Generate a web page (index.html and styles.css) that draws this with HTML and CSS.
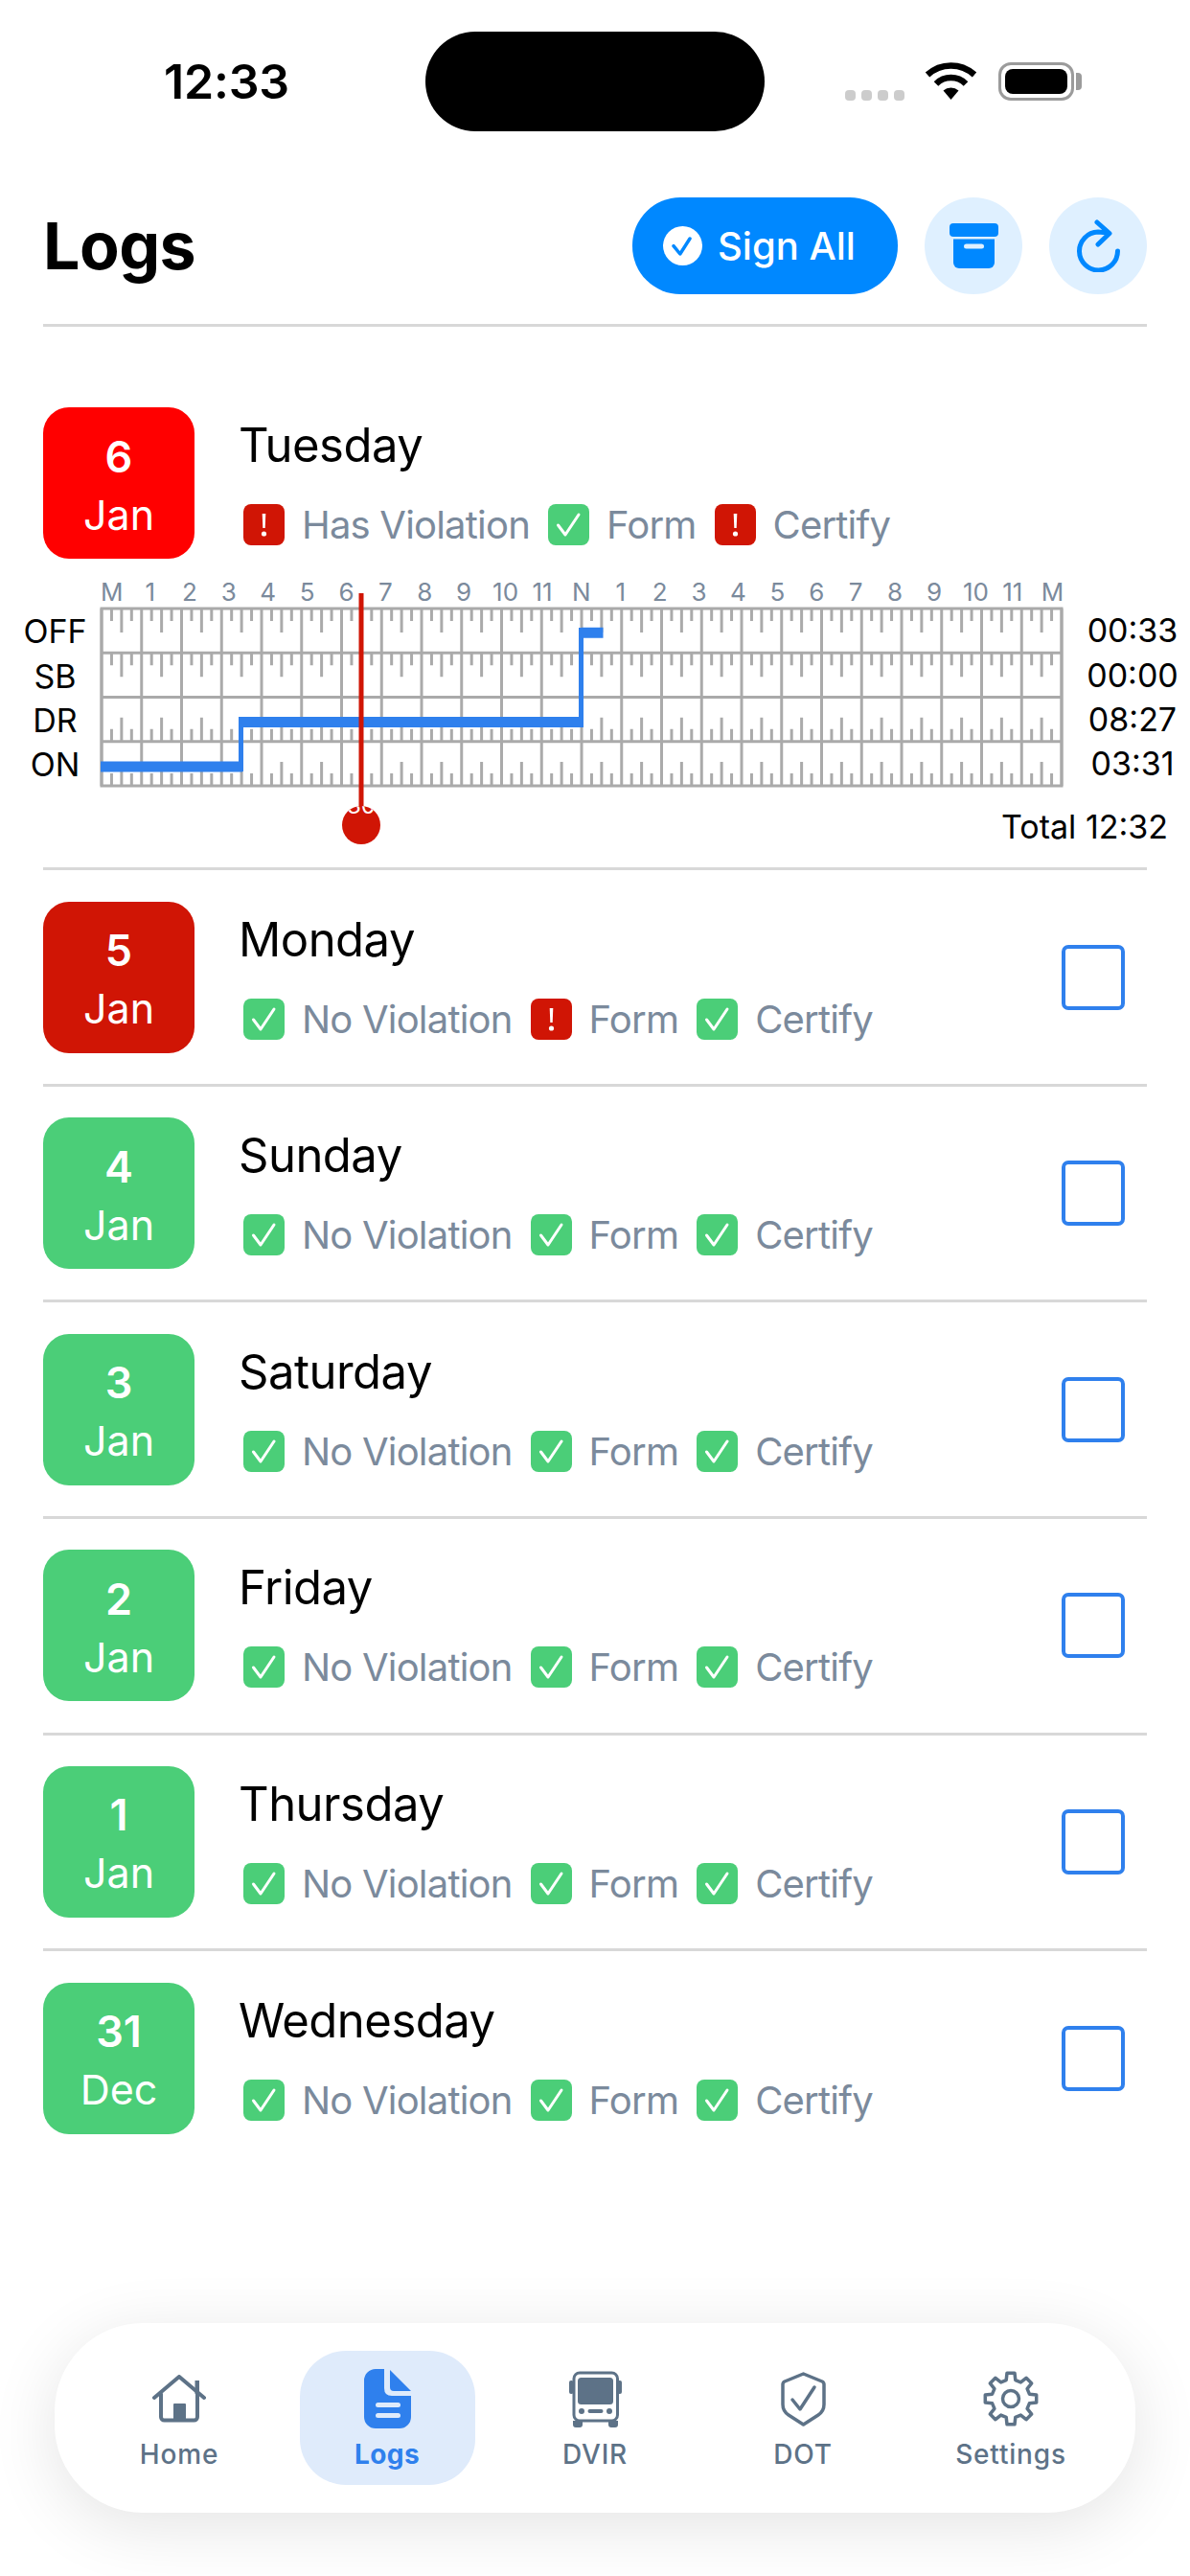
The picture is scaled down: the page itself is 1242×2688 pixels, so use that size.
FILE: index.html
```html
<!DOCTYPE html>
<html lang="en">
<head>
<meta charset="utf-8">
<title>Logs</title>
<link rel="stylesheet" href="styles.css">
</head>
<body>
<svg class="defs" width="0" height="0" aria-hidden="true">
  <symbol id="chip-ok" viewBox="0 0 43 43">
    <rect width="43" height="43" rx="8" fill="#4bce78"/>
    <path d="M10.5 22 18 32 32 11" fill="none" stroke="#fff" stroke-width="3" stroke-linecap="round" stroke-linejoin="round"/>
  </symbol>
  <symbol id="chip-alert" viewBox="0 0 43 43">
    <rect width="43" height="43" rx="8" fill="#d01505"/>
    <path d="M19.7 10h3.6l-.6 15h-2.4z" fill="#fff"/>
    <circle cx="21.5" cy="31" r="2.6" fill="#fff"/>
  </symbol>
</svg>

<main class="screen">
  <div class="status-bar">
    <span class="time">12:33</span>
    <span class="island"></span>
    <span class="signal"><i></i><i></i><i></i><i></i></span>
    <svg class="wifi" width="55" height="39" viewBox="0 0 55 39">
      <path d="M3 13A36 36 0 0 1 52 13M12 22.500A22 22 0 0 1 43 22.500" fill="none" stroke="#000" stroke-width="6.500"/>
      <path d="M27.500 39 19.500 29.500A12 12 0 0 1 35.500 29.500Z"/>
    </svg>
    <span class="battery"><span class="battery-level"></span></span>
  </div>

  <header class="page-header">
    <h1 class="page-title">Logs</h1>
    <button class="sign-all">
      <svg width="41" height="41" viewBox="0 0 41 41">
        <circle cx="20.500" cy="20.500" r="20.500" fill="#fff"/>
        <path d="M11 20.700 17.800 29 28 13" fill="none" stroke="#0088ff" stroke-width="3.500" stroke-linecap="round" stroke-linejoin="round"/>
      </svg>
      <span>Sign All</span>
    </button>
    <button class="round-btn round-btn-first">
      <svg width="51" height="48" viewBox="0 0 51 48">
        <rect width="51" height="14" rx="4" fill="#0088ff"/>
        <path d="M4 16.500H47V41a6 6 0 0 1-6 6H10a6 6 0 0 1-6-6Z" fill="#0088ff"/>
        <rect x="15" y="21.500" width="21" height="5" rx="2.500" fill="#dff0ff"/>
      </svg>
    </button>
    <button class="round-btn">
      <svg width="45" height="55" viewBox="0 0 45 55">
        <path d="M42.500 33A20 20 0 1 1 22 13L33 14M21 3 34 14.500 22 26" fill="none" stroke="#0088ff" stroke-width="5" stroke-linecap="round" stroke-linejoin="round"/>
      </svg>
    </button>
  </header>

  <section class="log-list">
    <article class="log-row log-row-open">
      <div class="log-head">
        <div class="date-box date-today"><b>6</b><span>Jan</span></div>
        <div class="log-info">
          <h2 class="day-name">Tuesday</h2>
          <div class="chips">
            <svg class="chip-icon"><use href="#chip-alert"/></svg><span class="chip-text">Has Violation</span>
            <svg class="chip-icon"><use href="#chip-ok"/></svg><span class="chip-text">Form</span>
            <svg class="chip-icon"><use href="#chip-alert"/></svg><span class="chip-text">Certify</span>
          </div>
        </div>
      </div>

      <div class="hours">
        <span>M</span><span>1</span><span>2</span><span>3</span><span>4</span><span>5</span><span>6</span><span>7</span><span>8</span><span>9</span><span>10</span><span>11</span><span>N</span><span>1</span><span>2</span><span>3</span><span>4</span><span>5</span><span>6</span><span>7</span><span>8</span><span>9</span><span>10</span><span>11</span><span>M</span>
      </div>

      <div class="chart">
        <div class="chart-labels"><span>OFF</span><span>SB</span><span>DR</span><span>ON</span></div>
        <svg class="chart-grid" width="1006" height="190" viewBox="0 0 1006 190">
          <defs><clipPath id="pin-clip"><circle cx="273" cy="228" r="20"/></clipPath></defs>
          <!-- hour columns and quarter ticks are dashed strokes running across the rows -->
          <path class="grid-frame" d="M2 2H1004V187H2ZM2 48.250H1004M2 94.500H1004M2 140.750H1004"/>
          <line class="grid-hour" x1="0.500" x2="1005.500" y1="94.500" y2="94.500"/>
          <path class="tick-short" d="M10.940 8.500H1000M10.940 54.750H1000M10.940 134.250H1000M10.940 180.500H1000"/>
          <path class="tick-long" d="M21.370 14.500H1000M21.370 60.750H1000M21.370 128.250H1000M21.370 174.500H1000"/>
          <path class="duty-line" d="M1 167H149M148 120.500H503M503 27.300H525.500"/>
          <path class="duty-riser" d="M147.500 172V115M502.500 126V22"/>
          <line class="pin-line" x1="273" x2="273" y1="-14" y2="213"/>
          <circle class="pin-head" cx="273" cy="228" r="20"/>
          <text class="pin-text" x="273" y="216" clip-path="url(#pin-clip)">30</text>
        </svg>
        <div class="chart-values"><span>00:33</span><span>00:00</span><span>08:27</span><span>03:31</span></div>
      </div>
      <p class="chart-total">Total 12:32</p>
    </article>

    <article class="log-row">
      <div class="date-box date-alert"><b>5</b><span>Jan</span></div>
      <div class="log-info">
        <h2 class="day-name">Monday</h2>
        <div class="chips">
          <svg class="chip-icon"><use href="#chip-ok"/></svg><span class="chip-text">No Violation</span>
          <svg class="chip-icon"><use href="#chip-alert"/></svg><span class="chip-text">Form</span>
          <svg class="chip-icon"><use href="#chip-ok"/></svg><span class="chip-text">Certify</span>
        </div>
      </div>
      <span class="checkbox"></span>
    </article>

    <article class="log-row">
      <div class="date-box date-ok"><b>4</b><span>Jan</span></div>
      <div class="log-info">
        <h2 class="day-name">Sunday</h2>
        <div class="chips">
          <svg class="chip-icon"><use href="#chip-ok"/></svg><span class="chip-text">No Violation</span>
          <svg class="chip-icon"><use href="#chip-ok"/></svg><span class="chip-text">Form</span>
          <svg class="chip-icon"><use href="#chip-ok"/></svg><span class="chip-text">Certify</span>
        </div>
      </div>
      <span class="checkbox"></span>
    </article>

    <article class="log-row">
      <div class="date-box date-ok"><b>3</b><span>Jan</span></div>
      <div class="log-info">
        <h2 class="day-name">Saturday</h2>
        <div class="chips">
          <svg class="chip-icon"><use href="#chip-ok"/></svg><span class="chip-text">No Violation</span>
          <svg class="chip-icon"><use href="#chip-ok"/></svg><span class="chip-text">Form</span>
          <svg class="chip-icon"><use href="#chip-ok"/></svg><span class="chip-text">Certify</span>
        </div>
      </div>
      <span class="checkbox"></span>
    </article>

    <article class="log-row">
      <div class="date-box date-ok"><b>2</b><span>Jan</span></div>
      <div class="log-info">
        <h2 class="day-name">Friday</h2>
        <div class="chips">
          <svg class="chip-icon"><use href="#chip-ok"/></svg><span class="chip-text">No Violation</span>
          <svg class="chip-icon"><use href="#chip-ok"/></svg><span class="chip-text">Form</span>
          <svg class="chip-icon"><use href="#chip-ok"/></svg><span class="chip-text">Certify</span>
        </div>
      </div>
      <span class="checkbox"></span>
    </article>

    <article class="log-row">
      <div class="date-box date-ok"><b>1</b><span>Jan</span></div>
      <div class="log-info">
        <h2 class="day-name">Thursday</h2>
        <div class="chips">
          <svg class="chip-icon"><use href="#chip-ok"/></svg><span class="chip-text">No Violation</span>
          <svg class="chip-icon"><use href="#chip-ok"/></svg><span class="chip-text">Form</span>
          <svg class="chip-icon"><use href="#chip-ok"/></svg><span class="chip-text">Certify</span>
        </div>
      </div>
      <span class="checkbox"></span>
    </article>

    <article class="log-row log-row-last">
      <div class="date-box date-ok"><b>31</b><span>Dec</span></div>
      <div class="log-info">
        <h2 class="day-name">Wednesday</h2>
        <div class="chips">
          <svg class="chip-icon"><use href="#chip-ok"/></svg><span class="chip-text">No Violation</span>
          <svg class="chip-icon"><use href="#chip-ok"/></svg><span class="chip-text">Form</span>
          <svg class="chip-icon"><use href="#chip-ok"/></svg><span class="chip-text">Certify</span>
        </div>
      </div>
      <span class="checkbox"></span>
    </article>
  </section>

  <nav class="tab-bar">
    <a class="tab">
      <span class="tab-icon">
        <svg width="56" height="50" viewBox="0 0 56 50">
          <path d="M2 24 28 2 54 24M9 20V44a3.500 3.500 0 0 0 3.500 3.500H43.500A3.500 3.500 0 0 0 47 44V20" fill="none" stroke="#5d7287" stroke-width="4" stroke-linecap="round" stroke-linejoin="round"/>
          <rect x="44.500" y="6" width="4.500" height="14" fill="#5d7287"/>
          <rect x="22" y="30" width="13" height="18" rx="1" fill="#5d7287"/>
        </svg>
      </span>
      <span class="tab-label">Home</span>
    </a>
    <a class="tab tab-active">
      <span class="tab-icon">
        <svg width="49" height="62" viewBox="0 0 49 62">
          <path d="M12 0H21V20Q21 28 29 28H49V50A12 12 0 0 1 37 62H12A12 12 0 0 1 0 50V12A12 12 0 0 1 12 0Z" fill="#2f80ed"/>
          <path d="M27 1 49 23H31Q27 23 27 19Z" fill="#2f80ed"/>
          <rect x="12" y="35" width="26" height="5" rx="2.500" fill="#dfebfb"/>
          <rect x="12" y="46" width="26" height="5" rx="2.500" fill="#dfebfb"/>
        </svg>
      </span>
      <span class="tab-label">Logs</span>
    </a>
    <a class="tab">
      <span class="tab-icon">
        <svg width="55" height="59" viewBox="0 0 55 59">
          <rect x="5" y="2" width="45.500" height="50" rx="6" fill="none" stroke="#5d7287" stroke-width="3"/>
          <rect x="0" y="10" width="4.500" height="14" rx="2" fill="#5d7287"/>
          <rect x="50.500" y="10" width="4.500" height="14" rx="2" fill="#5d7287"/>
          <rect x="9" y="7" width="37" height="28" rx="3.500" fill="#5d7287"/>
          <circle cx="13" cy="42" r="3" fill="#5d7287"/>
          <circle cx="42" cy="42" r="3" fill="#5d7287"/>
          <rect x="19.500" y="40" width="16" height="4" rx="2" fill="#5d7287"/>
          <path d="M4 52H14V56a3 3 0 0 1-3 3H7a3 3 0 0 1-3-3ZM41 52H51V56a3 3 0 0 1-3 3H44a3 3 0 0 1-3-3Z" fill="#5d7287"/>
        </svg>
      </span>
      <span class="tab-label">DVIR</span>
    </a>
    <a class="tab">
      <span class="tab-icon">
        <svg width="47" height="57" viewBox="0 0 47 57">
          <path d="M23.500 2 43 10Q45 11 45 13V34Q45 41 39 45L23.500 55 8 45Q2 41 2 34V13Q2 11 4 10Z" fill="none" stroke="#5d7287" stroke-width="3.500" stroke-linejoin="round"/>
          <path d="M12 29 20 39 35 16" fill="none" stroke="#5d7287" stroke-width="3.500" stroke-linecap="round" stroke-linejoin="round"/>
        </svg>
      </span>
      <span class="tab-label">DOT</span>
    </a>
    <a class="tab">
      <span class="tab-icon">
        <svg width="58" height="58" viewBox="0 0 58 58">
          <path d="M24.200 9.600 25 2.300H33L33.800 9.600 39.320 11.890 45.050 7.290 50.710 12.950 46.110 18.680 48.400 24.200 55.700 25V33L48.400 33.800 46.110 39.320 50.710 45.050 45.050 50.710 39.320 46.110 33.800 48.400 33 55.700H25L24.200 48.400 18.680 46.110 12.950 50.710 7.290 45.050 11.890 39.320 9.600 33.800 2.300 33V25L9.600 24.200 11.890 18.680 7.290 12.950 12.950 7.290 18.680 11.890Z" fill="none" stroke="#5d7287" stroke-width="3.500" stroke-linejoin="round"/>
          <circle cx="29" cy="29" r="8.500" fill="none" stroke="#5d7287" stroke-width="3.500"/>
        </svg>
      </span>
      <span class="tab-label">Settings</span>
    </a>
  </nav>
</main>
</body>
</html>
```

FILE: styles.css
```css
* { box-sizing: border-box; }

html, body { margin: 0; padding: 0; background: #fff; }

body {
  font-family: Inter, "Liberation Sans", sans-serif;
  color: #000;
}

.defs { position: absolute; }

.screen {
  width: 1242px;
  height: 2688px;
  display: flex;
  flex-direction: column;
  overflow: hidden;
}

/* status bar */
.status-bar {
  display: flex;
  align-items: center;
  height: 137px;
  padding: 33px 0 0 171px;
}

.time {
  width: 131px;
  font-size: 50px;
  font-weight: 600;
  line-height: 104px;
  letter-spacing: -0.2px;
  white-space: nowrap;
}

.island {
  width: 354px;
  height: 104px;
  margin-left: 142px;
  border-radius: 52px;
  background: #000;
}

.signal {
  display: flex;
  gap: 6px;
  margin: 28px 0 0 84px;
}

.signal i {
  width: 11px;
  height: 11px;
  border-radius: 4px;
  background: #ccc;
}

.wifi { margin: -1px 0 0 21px; }

.battery {
  position: relative;
  display: block;
  width: 79px;
  height: 40px;
  margin: 0 0 0 22px;
  padding: 4px;
  border: 3px solid #9b9b9b;
  border-radius: 13px;
}

.battery::after {
  content: "";
  position: absolute;
  right: -11px;
  top: 8px;
  width: 6px;
  height: 18px;
  border-radius: 0 4px 4px 0;
  background: #9b9b9b;
}

.battery-level {
  display: block;
  height: 100%;
  border-radius: 8px;
  background: #000;
}

/* page header */
.page-header {
  display: flex;
  align-items: center;
  margin: 69px 45px 0;
  padding-bottom: 31px;
  border-bottom: 3px solid #d8d8d8;
}

.page-title {
  margin: 0 auto 0 0;
  font-size: 68px;
  font-weight: 700;
  line-height: 101px;
  letter-spacing: -0.5px;
}

.sign-all {
  display: flex;
  align-items: center;
  gap: 16px;
  width: 277px;
  height: 101px;
  padding: 0 0 0 32px;
  border: 0;
  border-radius: 50px;
  background: #0088ff;
  color: #fff;
  font-family: inherit;
  font-size: 40px;
  font-weight: 500;
}

.round-btn {
  display: flex;
  align-items: center;
  justify-content: center;
  width: 102px;
  height: 101px;
  margin-left: 28px;
  padding: 0;
  border: 0;
  border-radius: 50%;
  background: #dff0ff;
}

/* log rows */
.log-list { padding-top: 52px; }

.log-row {
  display: flex;
  align-items: center;
  margin: 0 45px;
  padding: 32.3px 23px 32.3px 0;
  border-bottom: 3px solid #d8d8d8;
}

.log-row-open {
  display: block;
  padding: 32.3px 0 23px;
}

.log-row-last { border-bottom: 0; }

.log-head { display: flex; }

.date-box {
  display: flex;
  flex: none;
  flex-direction: column;
  align-items: center;
  justify-content: center;
  width: 158px;
  height: 158px;
  padding-top: 5px;
  border-radius: 27px;
  color: #fff;
}

.date-box b {
  font-size: 45px;
  font-weight: 600;
  line-height: 60px;
}

.date-box span {
  font-size: 43px;
  line-height: 60px;
}

.date-today { background: #ff0000; }
.date-alert { background: #d01505; }
.date-ok { background: #4bce78; }

.log-info {
  height: 158px;
  margin-left: 46px;
}

.day-name {
  margin: 10px 0 0;
  font-size: 49px;
  font-weight: 400;
  line-height: 60px;
  letter-spacing: -0.5px;
}

.chips {
  display: flex;
  align-items: center;
  height: 43px;
  margin: 31px 0 0 5px;
}

.chip-icon {
  flex: none;
  width: 43px;
  height: 43px;
  margin-right: 18px;
}

.chip-text {
  margin-right: 19px;
  color: #7b8a9c;
  font-size: 40px;
  letter-spacing: -0.8px;
  white-space: nowrap;
}

.checkbox {
  flex: none;
  width: 66px;
  height: 68px;
  margin-left: auto;
  border: 4px solid #2f80ed;
  border-radius: 7px;
}

/* hours of service chart */
.hours {
  display: flex;
  justify-content: space-between;
  margin: 20px 0 0 60px;
  width: 1004px;
  color: #7b8a9c;
  font-size: 26px;
  line-height: 30px;
}

.hours span {
  width: 22px;
  text-align: center;
  white-space: nowrap;
}

.chart {
  display: flex;
  margin: 0 -45px;
}

.chart-labels,
.chart-values {
  display: flex;
  flex-direction: column;
  font-size: 34px;
}

.chart-labels {
  width: 104px;
  padding: 3px 0 0 11px;
  text-align: center;
}

.chart-labels span,
.chart-values span {
  height: 46.25px;
  line-height: 46px;
}

.chart-values {
  flex: 1;
  padding: 2px 0 0 12px;
  text-align: center;
}

.chart-grid { flex: none; overflow: visible; }

.grid-frame { fill: none; stroke: #aaa; stroke-width: 3; }
.grid-hour { stroke: #aaa; stroke-width: 185; stroke-dasharray: 3 38.75; }
.tick-short { fill: none; stroke: #aaa; stroke-width: 13; stroke-dasharray: 3 17.875; }
.tick-long { fill: none; stroke: #aaa; stroke-width: 25; stroke-dasharray: 3 38.75; }
.duty-line { fill: none; stroke: #2f80ed; stroke-width: 11; }
.duty-riser { fill: none; stroke: #2f80ed; stroke-width: 5; }
.pin-line { stroke: #d01505; stroke-width: 5; }
.pin-head { fill: #d01505; }
.pin-text { fill: #fff; font-size: 24px; text-anchor: middle; }

.chart-total {
  margin: 21px -22px 0 0;
  font-size: 34px;
  line-height: 38px;
  text-align: right;
}

/* bottom tabs */
.tab-bar {
  display: flex;
  justify-content: space-between;
  height: 198px;
  margin: auto 57px 66px;
  padding: 29px 38.5px;
  border-radius: 92px;
  background: #fff;
  box-shadow: 0 14px 70px rgba(0, 0, 0, 0.11);
}

.tab {
  display: flex;
  flex-direction: column;
  align-items: center;
  width: 183px;
  height: 140px;
  padding-top: 19px;
  border-radius: 48px;
  color: #5d7287;
}

.tab-active {
  background: #dfebfb;
  color: #2f80ed;
}

.tab-icon {
  display: flex;
  align-items: center;
  height: 62px;
}

.tab-label {
  margin-top: 9px;
  font-size: 28px;
  font-weight: 500;
  line-height: 36px;
  letter-spacing: 0.8px;
}

.tab-active .tab-label { font-weight: 700; letter-spacing: 0.4px; }
```
